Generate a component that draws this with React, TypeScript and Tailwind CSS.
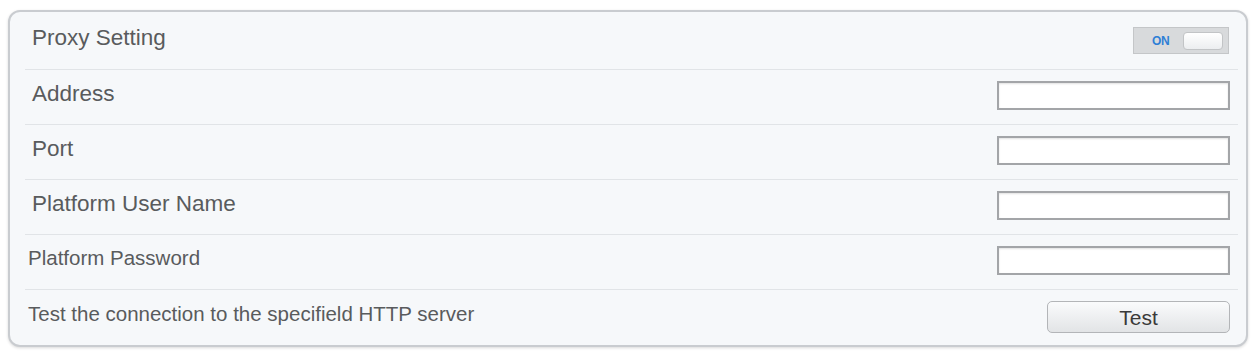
import React from "react";

const rows = [
  { label: "Address", size: "text-[22.5px]", pad: "pl-[7px]" },
  { label: "Port", size: "text-[22.5px]", pad: "pl-[7px]" },
  { label: "Platform User Name", size: "text-[22.5px]", pad: "pl-[7px]" },
  { label: "Platform Password", size: "text-[20.5px]", pad: "pl-[3px]" },
];

function TextInput() {
  return (
    <input
      type="text"
      className="w-[233px] h-[29px] bg-white border-2 border-[#a3a5a8] outline-none shadow-[inset_0_1px_2px_rgba(0,0,0,0.12)]"
    />
  );
}

export default function App() {
  return (
    <div
      className="h-[351px] bg-white pt-[10px] px-[8px]"
      style={{ fontFamily: '"Liberation Sans", Arial, sans-serif' }}
    >
      <div className="h-[337px] rounded-[12px] border-2 border-[#c9ccd0] bg-[#f6f8fa] pl-[15px] pr-[8px] shadow-[0_1px_3px_rgba(0,0,0,0.15)]">
        {/* Proxy switch */}
        <div className="h-[58px] flex items-center justify-between border-b border-[#e1e4e7] pl-[7px] pr-[9px]">
          <span className="text-[22.5px] text-[#595b5d] mb-[6px]">Proxy Setting</span>
          <div className="w-[96px] h-[27px] bg-[#d8dadc] border border-[#c4c6c8] flex items-center justify-between pl-[18px] pr-[5px]">
            <span className="text-[12px] font-bold text-[#2f7fd6] tracking-tight">ON</span>
            <div className="w-[40px] h-[18px] rounded-[4px] border border-[#c2c4c6] bg-gradient-to-b from-white to-[#eceef0]" />
          </div>
        </div>

        {rows.map((r) => (
          <div
            key={r.label}
            className={`h-[55px] flex items-center justify-between border-b border-[#e1e4e7] ${r.pad} pr-[8px]`}
          >
            <span className={`${r.size} text-[#595b5d] mb-[7px]`}>{r.label}</span>
            <div className="mb-[3px]">
              <TextInput />
            </div>
          </div>
        ))}

        {/* Test connection */}
        <div className="h-[55px] flex items-center justify-between pl-[3px] pr-[8px]">
          <span className="text-[20.5px] text-[#595b5d] mb-[7px]">
            Test the connection to the specifield HTTP server
          </span>
          <button className="w-[183px] h-[32px] mb-[1px] rounded-[5px] border border-[#b3b5b8] bg-gradient-to-b from-[#fafbfc] to-[#e2e4e6] text-[21px] text-[#3a3a3a] leading-none">
            Test
          </button>
        </div>
      </div>
    </div>
  );
}
